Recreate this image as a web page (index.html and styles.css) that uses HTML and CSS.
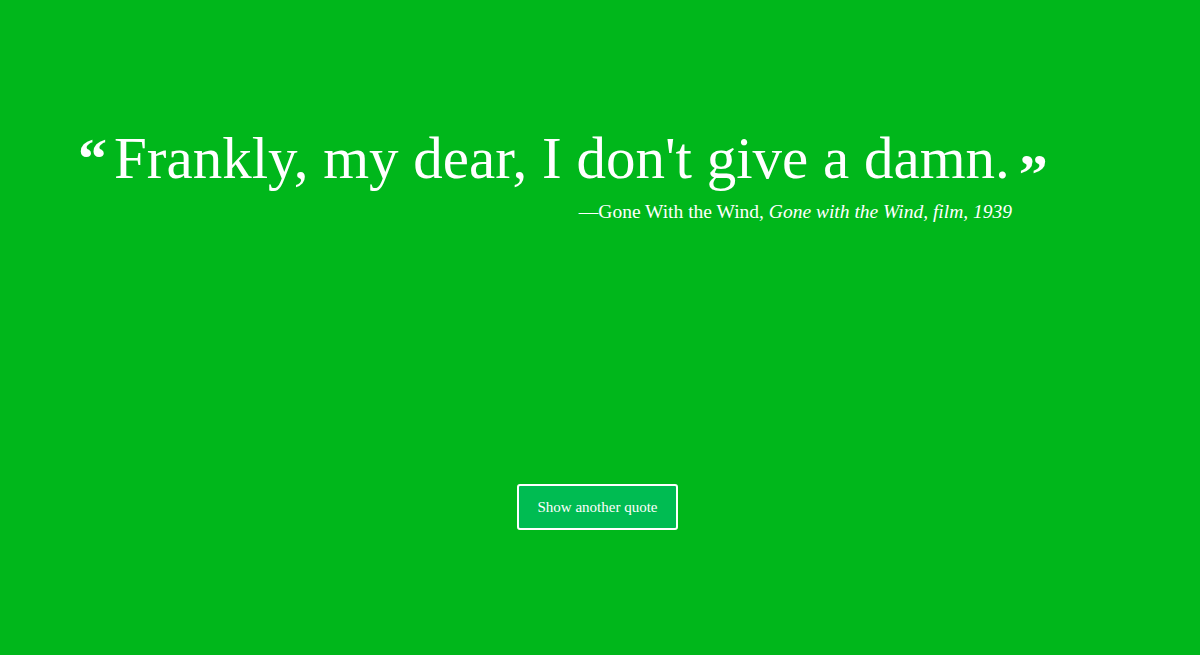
FILE: index.html
```html
<!DOCTYPE html>
<html>
<head>
<meta charset="utf-8">
<link rel="stylesheet" href="styles.css">
</head>
<body>
<main class="page">
  <section class="quote-box">
    <blockquote class="quote">
      <span class="mark mark-open">&ldquo;</span><span class="quote-text">Frankly, my dear, I don't give a damn.</span><span class="mark mark-close">&rdquo;</span>
    </blockquote>
    <p class="cite">&mdash;Gone With the Wind, <em>Gone with the Wind, film, 1939</em></p>
  </section>
  <div class="actions">
    <button class="btn">Show another quote</button>
  </div>
</main>
</body>
</html>
```
FILE: styles.css
```css
html, body {
  margin: 0;
  padding: 0;
  height: 100%;
  background: #00b71b;
}
.page {
  height: 655px;
  display: flex;
  flex-direction: column;
  font-family: "Liberation Serif", serif;
  color: #fff;
}
.quote-box {
  padding: 118px 0 0 78px;
  width: 970px;
}
.quote {
  margin: 0;
  font-size: 59px;
  line-height: 80px;
  white-space: nowrap;
}
.mark {
  display: inline-block;
  font-family: "Liberation Serif", serif;
  font-weight: bold;
  font-size: 58px;
  line-height: 40px;
  height: 40px;
  vertical-align: top;
  position: relative;
}
.mark-open { margin-right: 7px; top: 21px; }
.mark-close { margin-left: 9px; top: 37px; }
.cite {
  margin: 0;
  text-align: right;
  padding-right: 36px;
  font-size: 19.5px;
  line-height: 24px;
  padding-top: 2px;
}
.cite em { font-style: italic; }
.actions {
  margin-top: 260px;
  display: flex;
  justify-content: center;
}
.btn {
  width: 161px;
  height: 46px;
  background: #00bc52;
  border: 2px solid #fff;
  border-radius: 3px;
  color: #fff;
  font-family: "Liberation Serif", serif;
  font-size: 15px;
  padding: 0;
  margin-left: -5px;
}
```
